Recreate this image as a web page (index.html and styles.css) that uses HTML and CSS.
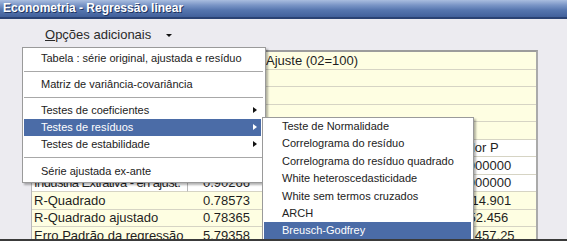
FILE: index.html
```html
<!DOCTYPE html>
<html lang="pt">
<head>
    <meta charset="UTF-8">
    <title>Econometria - Regressão linear</title>
    <link rel="stylesheet" href="styles.css">
</head>
<body>
    <div class="window">
        <!-- Title bar -->
        <div class="titlebar">Econometria - Regressão linear</div>

        <!-- Menu bar -->
        <div class="menubar">
            <span class="menu-btn"><u>O</u>pções adicionais</span>
            <span class="caret"></span>
        </div>

        <!-- Results -->
        <table class="results">
            <colgroup>
                <col class="c-label">
                <col class="c-value">
                <col class="c-label2">
                <col class="c-value2">
            </colgroup>
            <tr class="yellow"><td></td><td></td><td>Ajuste (02=100)</td><td></td></tr>
            <tr class="yellow"><td></td><td></td><td></td><td></td></tr>
            <tr class="yellow"><td></td><td></td><td></td><td></td></tr>
            <tr class="yellow"><td></td><td></td><td></td><td></td></tr>
            <tr class="yellow"><td></td><td></td><td></td><td></td></tr>
            <tr class="white"><td class="vline"></td><td></td><td></td><td>Valor P</td></tr>
            <tr class="white"><td class="vline"></td><td></td><td></td><td>0.000000</td></tr>
            <tr class="white"><td class="vline tight">Industria Extrativa - en ajust.</td><td class="num">0.90266</td><td></td><td>0.000000</td></tr>
            <tr class="yellow"><td>R-Quadrado</td><td class="num">0.78573</td><td></td><td>2614.901</td></tr>
            <tr class="yellow"><td>R-Quadrado ajustado</td><td class="num">0.78365</td><td></td><td>-652.456</td></tr>
            <tr class="yellow"><td>Erro Padrão da regressão</td><td class="num">5.79358</td><td></td><td>-11457.25</td></tr>
        </table>

        <!-- Opções adicionais menu -->
        <ul class="popup main-menu">
            <li class="item">Tabela : série original, ajustada e resíduo</li>
            <li class="sep"></li>
            <li class="item">Matriz de variância-covariância</li>
            <li class="sep"></li>
            <li class="item has-sub">Testes de coeficientes</li>
            <li class="item has-sub active">Testes de resíduos</li>
            <li class="item has-sub">Testes de estabilidade</li>
            <li class="sep last"></li>
            <li class="item">Série ajustada ex-ante</li>
        </ul>

        <!-- Testes de resíduos submenu -->
        <ul class="popup sub-menu">
            <li class="item">Teste de Normalidade</li>
            <li class="item">Correlograma do resíduo</li>
            <li class="item">Correlograma do resíduo quadrado</li>
            <li class="item">White heteroscedasticidade</li>
            <li class="item">White sem termos cruzados</li>
            <li class="item">ARCH</li>
            <li class="item active">Breusch-Godfrey</li>
        </ul>
    </div>
</body>
</html>
```

FILE: styles.css
```css
body {
    margin: 0;
    padding: 0;
    font-family: "Liberation Sans", Arial, sans-serif;
    overflow: hidden;
}

/* Window */
.window {
    position: relative;
    width: 567px;
    height: 239px;
    background: #ecebf0;
    border-bottom: 2px solid #3a3a3a;
    overflow: hidden;
}

/* Title bar */
.titlebar {
    height: 17px;
    line-height: 17px;
    padding-left: 3px;
    font-size: 12px;
    font-weight: bold;
    color: #fff;
    text-shadow: 1px 1px 0 #1f3460;
    background: linear-gradient(#a9bddf 0%, #7a95c6 30%, #5575ae 60%, #41609b 100%);
    border-bottom: 2px solid #2a4273;
}

/* Menu bar */
.menubar {
    display: flex;
    align-items: center;
    height: 31px;
    padding-left: 45px;
    font-size: 13px;
    color: #2a2a2a;
}

.caret {
    width: 0;
    height: 0;
    margin-left: 15px;
    margin-top: 1px;
    border-left: 3px solid transparent;
    border-right: 3px solid transparent;
    border-top: 3px solid #111;
}

/* Results table */
.results {
    margin-left: 31px;
    width: 507px;
    table-layout: fixed;
    border-collapse: separate;
    border-spacing: 0;
    border-top: 2px solid #9c9c9c;
    border-right: 2px solid #aaaaaa;
    border-left: 1px solid #b8b8b8;
    font-size: 13px;
    color: #1e1e1e;
}

.c-label { width: 156px; }
.c-value { width: 70px; }
.c-label2 { width: 199px; }

.results tr {
    height: 17.5px;
}

.results td {
    padding: 0 0 0 2px;
    border-bottom: 1px solid #d6d4c4;
    white-space: nowrap;
    overflow: hidden;
}

.results td:nth-child(3) {
    padding-left: 8px;
}

.results td:nth-child(4) {
    padding-left: 0;
}

.results .num {
    text-align: right;
    padding-right: 8px;
}

.results .vline {
    border-right: 1px solid #b8b8b8;
}

.results .tight {
    letter-spacing: -0.6px;
}

.yellow {
    background: #fefee2;
}

.white {
    background: #fff;
}

/* Popup menus */
.popup {
    position: absolute;
    margin: 0;
    list-style: none;
    box-sizing: border-box;
    background: #fff;
    border: 1px solid #9a9a9a;
    box-shadow: 2px 2px 2px rgba(0, 0, 0, 0.3);
    font-size: 11px;
    color: #222;
}

.popup .item {
    position: relative;
    height: 17px;
    line-height: 17px;
    white-space: nowrap;
}

.popup .active {
    background: #4b6ca7;
    color: #fff;
}

.main-menu {
    left: 22px;
    top: 47px;
    width: 244px;
    padding: 1px 4px 2px 1px;
}

.main-menu .item {
    padding-left: 17px;
}

.main-menu .item:first-child {
    margin-top: 1px;
}

.main-menu .sep {
    height: 9px;
    background: linear-gradient(transparent 4px, #a8a8a8 4px, #a8a8a8 5px, transparent 5px);
    margin-right: -2px;
}

.main-menu .sep.last {
    height: 10px;
}

.has-sub::after {
    content: "";
    position: absolute;
    right: 4px;
    top: 5px;
    border-left: 4px solid #111;
    border-top: 3.5px solid transparent;
    border-bottom: 3.5px solid transparent;
}

.has-sub.active::after {
    border-left-color: #fff;
}

.sub-menu {
    left: 262px;
    top: 117px;
    width: 212px;
    height: 140px;
    padding: 0 2px 0 1px;
}

.sub-menu .item {
    height: 17.4px;
    line-height: 17.4px;
    padding-left: 18px;
}
```
